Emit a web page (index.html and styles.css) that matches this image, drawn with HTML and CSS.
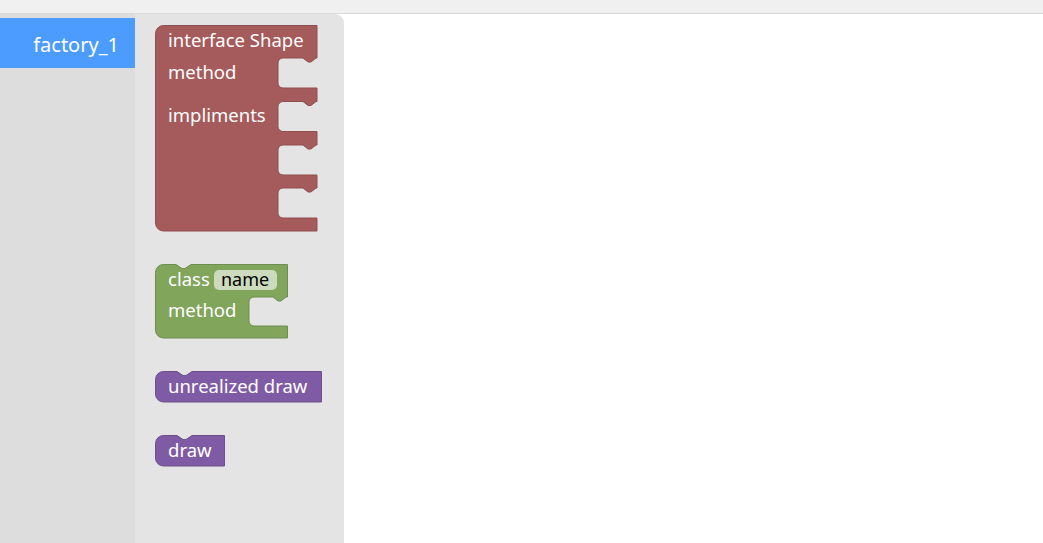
FILE: index.html
```html
<!DOCTYPE html>
<html>
<head>
<meta charset="utf-8">
<link rel="stylesheet" href="styles.css">
</head>
<body>
<div class="topbar"></div>
<div class="main">
  <div class="toolbox">
    <div class="tb-row selected">factory_1</div>
  </div>
  <div class="flyout">
    <svg class="blk blk-red" width="164" height="208" viewBox="0 0 164 208">
      <path class="shape red" d="M0.5,8.5 A8,8 0 0 1 8.5,0.5 H162 V33 H161 l-5,4 h-3 l-5,-4 H128 A5,5 0 0 0 123,38 V58 A5,5 0 0 0 128,63 H162
        V76.5 H161 l-5,4 h-3 l-5,-4 H128 A5,5 0 0 0 123,81.5 V101.5 A5,5 0 0 0 128,106.5 H162
        V120 H161 l-5,4 h-3 l-5,-4 H128 A5,5 0 0 0 123,125 V145 A5,5 0 0 0 128,150 H162
        V163 H161 l-5,4 h-3 l-5,-4 H128 A5,5 0 0 0 123,168 V188 A5,5 0 0 0 128,193 H162
        V206 H8.5 A8,8 0 0 1 0.5,198 Z"/>
      <text x="13" y="22">interface Shape</text>
      <text x="13" y="54">method</text>
      <text x="13" y="97">impliments</text>
    </svg>
    <svg class="blk blk-green" width="134" height="76" viewBox="0 0 134 76">
      <path class="shape green" d="M0.5,8.5 A8,8 0 0 1 8.5,0.5 H21 l6,4 h3 l6,-4 H132.5 V33 H131 l-5,4 h-3 l-5,-4 H99 A5,5 0 0 0 94,38 V57 A5,5 0 0 0 99,62 H132.5 V74 H8.5 A8,8 0 0 1 0.5,66 Z"/>
      <rect class="field" x="59" y="6" width="63" height="20" rx="5" ry="5"/>
      <text x="13" y="22">class</text>
      <text class="field-text" x="66" y="22">name</text>
      <text x="13" y="53">method</text>
    </svg>
    <svg class="blk blk-p1" width="168" height="33" viewBox="0 0 168 33">
      <path class="shape purple" d="M0.5,8.5 A8,8 0 0 1 8.5,0.5 H22 l6,4 h3 l6,-4 H166.5 V31 H8.5 A8,8 0 0 1 0.5,23 Z"/>
      <text x="13" y="22">unrealized draw</text>
    </svg>
    <svg class="blk blk-p2" width="71" height="33" viewBox="0 0 71 33">
      <path class="shape purple" d="M0.5,8.5 A8,8 0 0 1 8.5,0.5 H22 l6,4 h3 l6,-4 H69.5 V31 H8.5 A8,8 0 0 1 0.5,23 Z"/>
      <text x="13" y="22">draw</text>
    </svg>
  </div>
  <div class="workspace"></div>
</div>
</body>
</html>
```
FILE: styles.css
```css
html, body {
  margin: 0;
  padding: 0;
  height: 100%;
  overflow: hidden;
  background: #ffffff;
  font-family: "Noto Sans", "Open Sans", sans-serif;
}
.topbar {
  height: 13px;
  background: #f0f0f0;
  border-bottom: 1px solid #dadada;
}
.main {
  display: flex;
  height: 529px;
}
.toolbox {
  width: 135px;
  background: #dddddd;
  padding-top: 4px;
  box-sizing: border-box;
}
.tb-row {
  height: 50px;
  line-height: 54px;
  box-sizing: border-box;
  text-align: right;
  padding-right: 16px;
  color: #ffffff;
  font-size: 20px;
  overflow: hidden;
}
.tb-row.selected {
  background: #4c9bff;
}
.flyout {
  width: 209px;
  background: #e4e4e4;
  border-top-right-radius: 9px;
  display: flex;
  flex-direction: column;
  align-items: flex-start;
  padding-left: 20px;
  padding-top: 11px;
  box-sizing: border-box;
}
.workspace {
  flex: 1;
  background: #ffffff;
}
.blk {
  display: block;
  overflow: visible;
}
.blk text {
  fill: #ffffff;
  font-family: "Noto Sans", "Open Sans", sans-serif;
  font-size: 18.5px;
}
.blk .field-text {
  fill: #000000;
  font-size: 18px;
}
.blk-green { margin-top: 31px; }
.blk-p1 { margin-top: 31px; }
.blk-p2 { margin-top: 31px; }
.shape { stroke-width: 1; }
.red { fill: #a55b5b; stroke: #8e4f4f; }
.green { fill: #80a55b; stroke: #6e8e4f; }
.purple { fill: #805ba5; stroke: #6e4f8e; }
.field { fill: #ccdbbd; }
```
